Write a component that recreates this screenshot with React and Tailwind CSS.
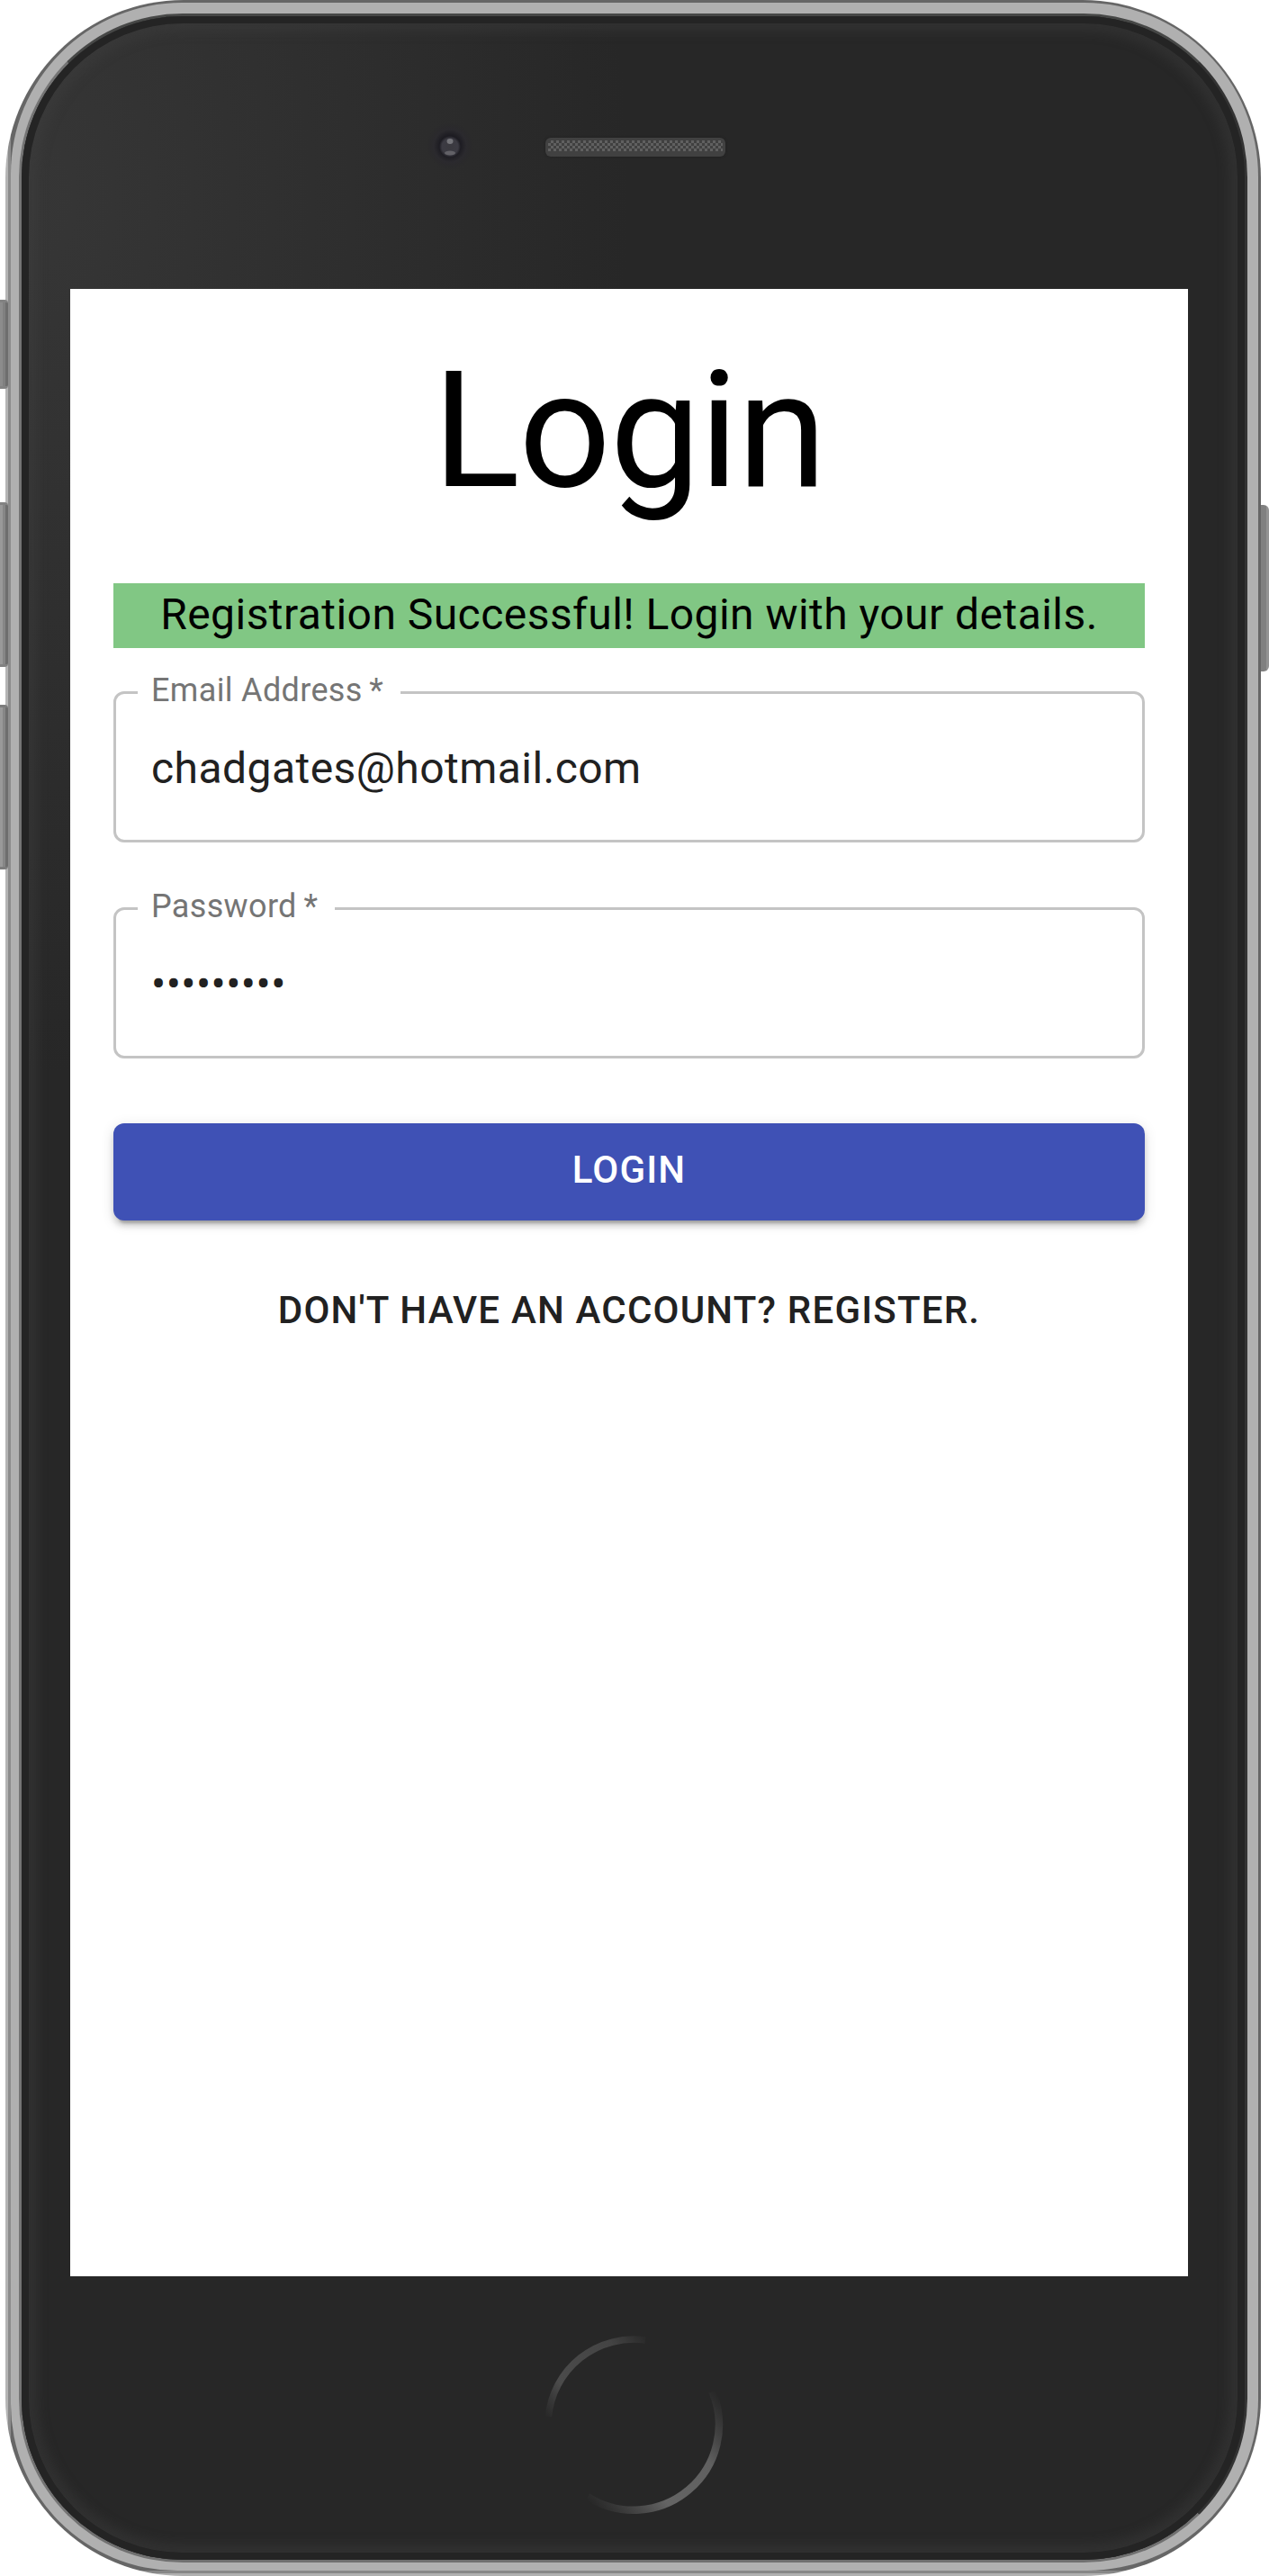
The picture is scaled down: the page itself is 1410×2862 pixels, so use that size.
function LeftButtons() {
  return (
    <div className="z-10 -mr-[3px] flex w-[9px] shrink-0 flex-col pt-[333px]">
      <div className="h-[99px] rounded-r-[4px] border-y-[3px] border-[#828282] bg-[linear-gradient(90deg,#8c8c8c_3px,#808080_3px,#808080_6px,#6e6e6e_6px)]" />
      <div className="mt-[126px] h-[183px] rounded-r-[4px] border-y-[3px] border-[#828282] bg-[linear-gradient(90deg,#999_3px,#868686_3px,#868686_6px,#6e6e6e_6px)]" />
      <div className="mt-[42px] h-[183px] rounded-r-[4px] border-y-[3px] border-[#7c7c7c] bg-[linear-gradient(90deg,#999_3px,#868686_3px,#868686_6px,#6e6e6e_6px)]" />
    </div>
  );
}

function PowerButton() {
  return (
    <div className="w-[9px] shrink-0 pt-[561px]">
      <div className="h-[185px] rounded-r-[6px] bg-[linear-gradient(90deg,#808080_6px,#939393_6px)]" />
    </div>
  );
}

function Earpiece() {
  return (
    <div className="mt-[135px] h-[21px] w-[200px] rounded-[6px] bg-[#414141] p-[3px] shadow-[0_0_3px_#1f1f1f]">
      <div className="h-[12px] bg-[repeating-conic-gradient(#606060_0_25%,#404040_0_50%)] bg-[length:6px_6px]" />
    </div>
  );
}

function Camera() {
  return (
    <svg className="mt-[116px]" width="60" height="60" viewBox="0 0 60 60">
      <defs>
        <radialGradient id="halo">
          <stop offset="0.45" stopColor="#1d1c22" />
          <stop offset="0.7" stopColor="#2b2a2e" />
          <stop offset="1" stopColor="#28272a" stopOpacity="0" />
        </radialGradient>
        <radialGradient id="lens">
          <stop offset="0" stopColor="#3a393f" />
          <stop offset="0.75" stopColor="#3c3b43" />
          <stop offset="1" stopColor="#1d1c22" />
        </radialGradient>
      </defs>
      <circle cx="30" cy="28" r="26" fill="url(#halo)" />
      <circle cx="30" cy="29" r="12" fill="url(#lens)" />
      <ellipse cx="30" cy="23" rx="3.5" ry="3" fill="#747479" />
      <ellipse cx="30" cy="36" rx="6" ry="2.5" fill="#626167" />
    </svg>
  );
}

function HomeButton() {
  return (
    <svg width="216" height="216" viewBox="0 0 216 216" fill="none">
      <defs>
        <linearGradient id="upper" gradientUnits="userSpaceOnUse" x1="13" y1="103" x2="124" y2="10">
          <stop offset="0" stopColor="#474747" stopOpacity="0" />
          <stop offset="0.25" stopColor="#4b4b4b" />
          <stop offset="0.75" stopColor="#444" />
          <stop offset="1" stopColor="#444" stopOpacity="0" />
        </linearGradient>
        <linearGradient id="lower" gradientUnits="userSpaceOnUse" x1="55" y1="190" x2="197" y2="69">
          <stop offset="0" stopColor="#5a5a5a" stopOpacity="0" />
          <stop offset="0.35" stopColor="#646464" />
          <stop offset="0.7" stopColor="#606060" />
          <stop offset="1" stopColor="#555" stopOpacity="0" />
        </linearGradient>
      </defs>
      <path d="M13.4 99A95 95 0 0 1 121 14" stroke="url(#upper)" strokeWidth="7.5" />
      <path d="M57 188A95 95 0 0 0 195.5 71" stroke="url(#lower)" strokeWidth="8.5" />
    </svg>
  );
}

function Field({ label, children }) {
  return (
    <div className="h-[168px]">
      <fieldset className="-mt-[15px] h-[183px] rounded-[12px] border-[3px] border-[#c4c4c4] px-[24px]">
        <legend className="h-[33px] whitespace-nowrap pl-[15px] pr-[19px] text-[36px] leading-[29px] tracking-[0.34px] text-[#757575]">
          {label}
        </legend>
        <div className="px-[15px] pt-[39px] text-[48px] leading-[57px] tracking-[0.45px] text-[#212121]">{children}</div>
      </fieldset>
    </div>
  );
}

function LoginScreen() {
  return (
    <main className="flex h-[2208px] w-[1242px] flex-col bg-white px-[48px] pt-[48px] text-center text-black">
      <h1 className="pt-[2px] text-[180px] leading-[216px] tracking-[-1.5px]">Login</h1>
      <p className="mt-[61px] h-[72px] bg-[#81c784] text-[48px] leading-[70px] tracking-[0.45px]">
        Registration Successful! Login with your details.
      </p>
      <div className="mt-[48px] flex flex-col gap-[72px] text-left">
        <Field label="Email Address&thinsp;*">chadgates@hotmail.com</Field>
        <Field label="Password&thinsp;*">•••••••••</Field>
      </div>
      <div className="mt-[72px] flex flex-col gap-[48px] text-[42px] font-medium tracking-[1.2px]">
        <button className="h-[108px] rounded-[12px] bg-[#3f51b5] pb-[6px] text-white shadow-[0_9px_3px_-6px_rgba(0,0,0,0.2),0_6px_6px_0_rgba(0,0,0,0.14),0_3px_15px_0_rgba(0,0,0,0.12)]">
          LOGIN
        </button>
        <button className="h-[108px] pb-[5px] text-[#212121]">DON'T HAVE AN ACCOUNT? REGISTER.</button>
      </div>
    </main>
  );
}

export default function App() {
  return (
    <div className="flex h-[2862px] w-[1410px] overflow-hidden bg-white font-[Roboto,sans-serif]">
      <LeftButtons />
      <div className="h-[2862px] w-[1395px] shrink-0 rounded-[198px] bg-[linear-gradient(90deg,#b4b4b4_3px,#8c8c8c_3px,#8c8c8c_6px,transparent_6px),linear-gradient(0deg,#b0b0b0_3px,#888_3px,#888_6px,#666_6px)] pb-[6px] pl-[6px] pr-[3px] pt-[3px]">
        <div className="h-[2853px] rounded-bl-[185px] rounded-br-[190px] rounded-tl-[190px] rounded-tr-[193px] bg-[#b0b0b0] pb-[9px] pl-[9px] pr-[12px] pt-[12px]">
          <div className="h-[2832px] rounded-[182px] border-[3px] border-b-[#707070] border-l-[#747474] border-r-[#333] border-t-[#464746] bg-[#272727]">
            <div className="flex h-[2826px] flex-col rounded-[179px] bg-[radial-gradient(900px_1300px_at_0_200px,rgba(56,56,56,0.9),rgba(39,39,39,1)_75%)] shadow-[inset_0_0_0_8px_#242424,inset_0_0_12px_18px_rgba(66,66,66,0.35)]">
              <header className="flex h-[303px] items-start gap-[76px] pl-[446px]">
                <Camera />
                <Earpiece />
              </header>
              <div className="flex pl-[54px]">
                <LoginScreen />
              </div>
              <footer className="flex justify-center pt-[57px]">
                <HomeButton />
              </footer>
            </div>
          </div>
        </div>
      </div>
      <PowerButton />
    </div>
  );
}
